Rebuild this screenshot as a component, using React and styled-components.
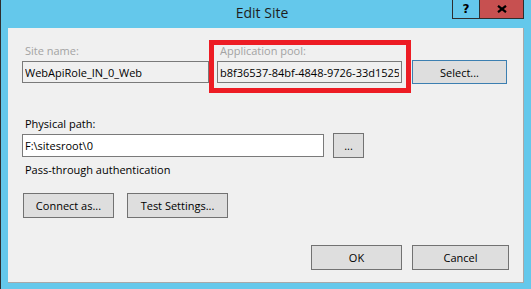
import React from 'react';
import styled, { createGlobalStyle } from 'styled-components';

const GlobalStyle = createGlobalStyle`
  html, body {
    margin: 0;
    padding: 0;
    background: #64c8eb;
  }
  * {
    box-sizing: border-box;
  }
`;

const Window = styled.div`
  width: 531px;
  height: 289px;
  display: flex;
  flex-direction: column;
  background: #64c8eb;
  border-left: 1px solid #2e2e2e;
  font-family: 'Open Sans', 'Noto Sans', sans-serif;
  font-size: 11px;
  color: #000;
`;

const TitleBar = styled.div`
  height: 28px;
  display: grid;
  grid-template-columns: 1fr auto 1fr;
`;

const Title = styled.div`
  grid-column: 2;
  padding: 3px 8px 0 0;
  font-size: 14px;
  line-height: 19px;
  color: #1e1e1e;
`;

const Caption = styled.div`
  grid-column: 3;
  justify-self: end;
  align-self: start;
  display: flex;
  height: 19px;
  margin-right: 7px;
  border: 1px solid #2e2e2e;
  border-top: none;
`;

const CaptionButton = styled.div`
  width: ${p => p.$w}px;
  height: 18px;
  display: flex;
  align-items: center;
  justify-content: center;
  background: ${p => p.$close ? '#c75050' : '#64c8eb'};
  border-left: ${p => p.$close ? '1px solid #2e2e2e' : 'none'};
  font-family: 'DejaVu Sans', sans-serif;
  font-weight: bold;
  font-size: 12px;
  color: #000;
`;

const Client = styled.div`
  flex: 1;
  margin: 0 7px 6px 7px;
  background: #f0f0f0;
  border-right: 1px solid #a8a8a8;
  border-bottom: 1px solid #a8a8a8;
  padding: 15px 14px 0 14px;
  display: flex;
  flex-direction: column;
`;

const Row = styled.div`
  display: flex;
  align-items: ${p => p.$align || 'flex-start'};
  margin-top: ${p => p.$mt || 0}px;
  gap: ${p => p.$gap || 0}px;
  justify-content: ${p => p.$justify || 'flex-start'};
`;

const Field = styled.div`
  display: flex;
  flex-direction: column;
  margin-left: ${p => p.$ml || 0}px;
  width: ${p => p.$w}px;
  position: relative;
`;

const Highlight = styled.div`
  position: absolute;
  top: -3px;
  left: -8px;
  right: -9px;
  bottom: -10px;
  border: 5px solid #ed1c24;
  pointer-events: none;
`;

const Label = styled.div`
  line-height: 15px;
  padding-left: 3px;
  color: ${p => p.$disabled ? '#a3a3a3' : '#000'};
  margin-top: ${p => p.$mt || 0}px;
`;

const TextBox = styled.input`
  width: ${p => p.$w ? `${p.$w}px` : '100%'};
  height: ${p => p.$h || 22}px;
  margin-top: ${p => p.$mt ?? 3}px;
  padding: 0 2px;
  border: 1px solid #7a7a7a;
  background: ${p => p.$readonly ? '#f0f0f0' : '#fff'};
  font-family: 'Open Sans', 'Noto Sans', sans-serif;
  font-size: 11px;
  color: #000;
  outline: none;
`;

const Button = styled.button`
  width: ${p => p.$w}px;
  height: ${p => p.$h || 25}px;
  margin: ${p => p.$margin || 0};
  padding: 0;
  background: #dedede;
  border: 1px solid ${p => p.$default ? '#3c7fb1' : '#727272'};
  font-family: 'Open Sans', 'Noto Sans', sans-serif;
  font-size: 11px;
  color: #000;
  flex-shrink: 0;
`;

const CloseIcon = () => (
  <svg width="10" height="8" viewBox="0 0 10 8">
    <path d="M1 0.8 L9 7.2 M9 0.8 L1 7.2" stroke="#000" strokeWidth="2.2" />
  </svg>
);

const App = () => {
  return (
    <>
      <GlobalStyle />
      <Window>
        <TitleBar>
          <Title>Edit Site</Title>
          <Caption>
            <CaptionButton $w={26}>?</CaptionButton>
            <CaptionButton $w={44} $close>
              <CloseIcon />
            </CaptionButton>
          </Caption>
        </TitleBar>
        <Client>
          <Row>
            <Field $w={187}>
              <Label $disabled>Site name:</Label>
              <TextBox $readonly readOnly defaultValue="WebApiRole_IN_0_Web" />
            </Field>
            <Field $w={185} $ml={8}>
              <Label $disabled>Application pool:</Label>
              <TextBox $readonly readOnly defaultValue="b8f36537-84bf-4848-9726-33d1525" />
              <Highlight />
            </Field>
            <Button $w={95} $h={24} $default $margin="17px 0 0 10px">Select...</Button>
          </Row>

          <Label $mt={32}>Physical path:</Label>
          <Row $align="center" $mt={2}>
            <TextBox $w={302} $h={23} $mt={0} readOnly defaultValue="F:\sitesroot\0" />
            <Button $w={31} $margin="0 0 0 9px">...</Button>
          </Row>
          <Label $mt={4}>Pass-through authentication</Label>

          <Row $mt={16} $gap={13}>
            <Button $w={91} $margin="0 0 0 1px">Connect as...</Button>
            <Button $w={101}>Test Settings...</Button>
          </Row>

          <Row $mt={27} $gap={10} $justify="flex-end">
            <Button $w={91}>OK</Button>
            <Button $w={97}>Cancel</Button>
          </Row>
        </Client>
      </Window>
    </>
  );
};

export default App;
